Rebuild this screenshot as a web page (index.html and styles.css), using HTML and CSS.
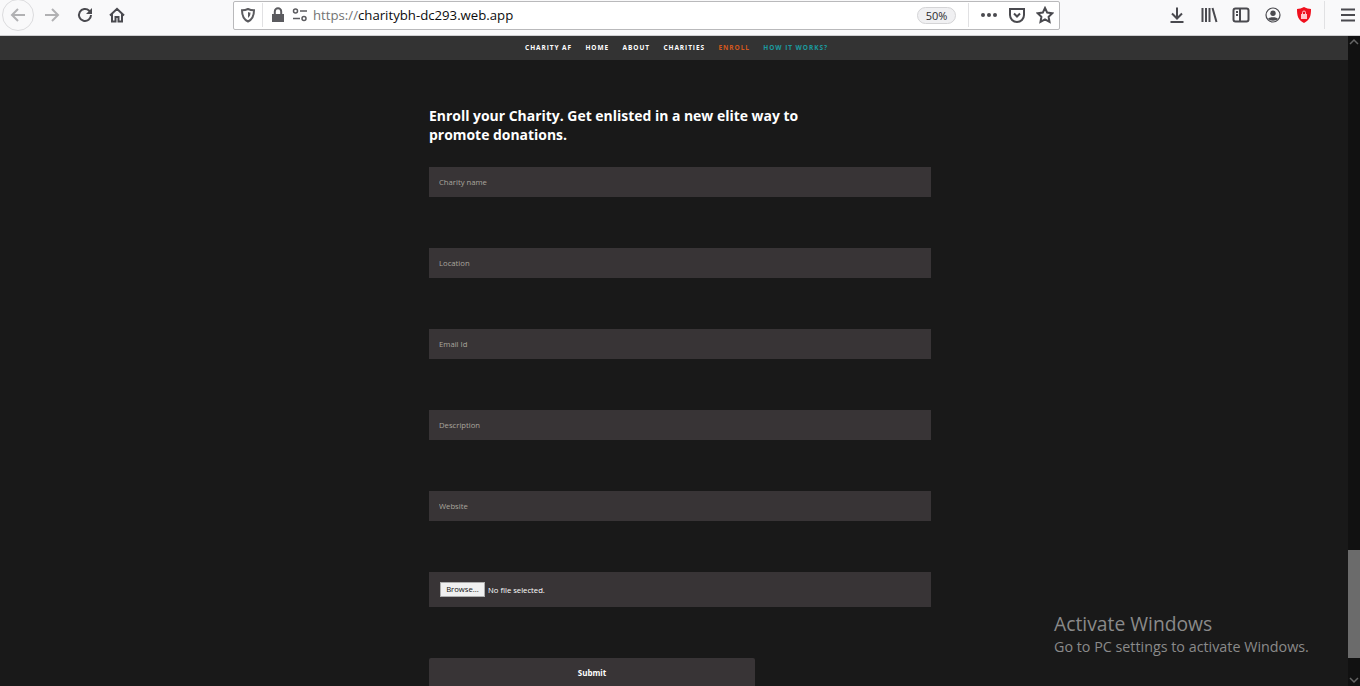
FILE: index.html
```html
<!DOCTYPE html>
<html lang="en">
<head>
<meta charset="utf-8">
<title>Charity AF</title>
<link rel="stylesheet" href="styles.css">
</head>
<body>
<header class="browser">
  <div class="nav-btns">
    <span class="round-btn">
      <svg width="18" height="18" viewBox="0 0 18 18" class="ic-faint"><path d="M16 9H3M9 3 3 9l6 6"/></svg>
    </span>
    <svg class="fwd ic-faint" width="18" height="18" viewBox="0 0 18 18"><path d="M2 9h13M9 3l6 6-6 6"/></svg>
    <svg class="reload ic-dark" width="18" height="18" viewBox="0 0 18 18"><path d="M15 9a6 6 0 1 1-1.800-4.300L15 6.500"/><path class="fill" d="M16 2v6h-6z"/></svg>
    <svg class="home ic-dark" width="18" height="18" viewBox="0 0 18 18"><path d="M2 9.500 9 2.800l7 6.700M4 8v7.500h3.500V11h3v4.500H14V8"/></svg>
  </div>
  <div class="urlbar">
    <svg class="ic-mid shield-ic" width="16" height="16" viewBox="0 0 16 16"><path d="M8 2c2 1 4 1.300 6 1.300 0 5-1 9-6 11.200C3 12.300 2 8.300 2 3.300 4 3.300 6 3 8 2z"/><path d="M8 5c.8.400 1.600.5 2.500.6 0 2.500-.7 4.200-2.500 5.300z" class="fill"/></svg>
    <span class="sep sep-start"></span>
    <svg class="lock" width="14" height="16" viewBox="0 0 14 16"><path class="lockbody" d="M1 7h12v8H1z"/><path class="lockarc" d="M3.800 7V4.500a3.200 3.200 0 0 1 6.400 0V7"/></svg>
    <svg class="ic-mid perm" width="16" height="16" viewBox="0 0 16 16"><circle cx="3.500" cy="4" r="2"/><path d="M8 4h7M1 11.500h7"/><circle cx="12" cy="11.500" r="2"/></svg>
    <span class="url"><span class="scheme">https://</span>charitybh-dc293.web.app</span>
    <span class="zoom">50%</span>
    <span class="sep sep-end"></span>
    <span class="dots"><i class="dot"></i><i class="dot"></i><i class="dot"></i></span>
    <svg class="ic-dark pocket" width="18" height="18" viewBox="0 0 18 18"><path d="M2 3h14v6a7 7 0 0 1-14 0z"/><path d="m6 7.500 3 3 3-3"/></svg>
    <svg class="ic-dark star" width="18" height="18" viewBox="0 0 18 18"><path d="m9 2 2.200 4.600 5 .7-3.600 3.500.9 5L9 13.400l-4.500 2.400.9-5L1.800 7.300l5-.7z"/></svg>
  </div>
  <div class="tools">
    <svg class="ic-dark" width="18" height="18" viewBox="0 0 18 18"><path d="M9 1.500V12M4 7.500l5 5 5-5M2.500 16h13"/></svg>
    <svg class="ic-dark" width="18" height="18" viewBox="0 0 18 18"><path d="M2.500 2v14M6 2v14M9.500 2v14M12.500 2l4 14"/></svg>
    <svg class="ic-dark" width="18" height="18" viewBox="0 0 18 18"><rect x="1.500" y="2.500" width="15" height="13" rx="2"/><path d="M8 2.500v13M4 6h2M4 9h2"/></svg>
    <svg class="ic-thin" width="18" height="18" viewBox="0 0 18 18"><circle cx="9" cy="9" r="7"/><circle class="fill" cx="9" cy="7.300" r="2.700"/><path class="fill" d="M4 13c1-2.500 9-2.500 10 0-2 2.200-8 2.200-10 0z"/></svg>
    <svg class="shield" width="16" height="18" viewBox="0 0 16 18"><path class="shield-red" d="M8 1c2 1.200 5 2 7 2 0 7-1 11-7 14C2 14 1 10 1 3c2 0 5-.8 7-2z"/><path class="shield-lock" d="M5 8h6v5H5z"/><path class="shield-arc" d="M6.500 8V6.500a1.500 1.500 0 0 1 3 0V8"/></svg>
    <span class="sep tool-sep"></span>
    <svg class="ic-dark" width="16" height="18" viewBox="0 0 16 18"><path d="M1 3.500h14M1 9h14M1 14.500h14"/></svg>
  </div>
</header>

<div class="viewport">
  <div class="page">
    <nav class="sitenav">
      <a class="link">CHARITY AF</a>
      <a class="link">HOME</a>
      <a class="link">ABOUT</a>
      <a class="link">CHARITIES</a>
      <a class="link active">ENROLL</a>
      <a class="link teal">HOW IT WORKS?</a>
    </nav>
    <main class="content">
      <h1 class="title">Enroll your Charity. Get enlisted in a new elite way to promote donations.</h1>
      <form class="form">
        <input class="field" type="text" placeholder="Charity name">
        <input class="field" type="text" placeholder="Location">
        <input class="field" type="text" placeholder="Email Id">
        <input class="field" type="text" placeholder="Description">
        <input class="field" type="text" placeholder="Website">
        <div class="file"><span class="browse">Browse...</span><span class="nofile">No file selected.</span></div>
        <button class="submit" type="button">Submit</button>
      </form>
    </main>
  </div>
  <div class="scrollbar">
    <svg class="arrow" width="12" height="12" viewBox="0 0 12 12"><path d="m2 8 4-4 4 4"/></svg>
    <div class="track"><div class="thumb"></div></div>
    <svg class="arrow" width="12" height="12" viewBox="0 0 12 12"><path d="m2 4 4 4 4-4"/></svg>
  </div>
  <aside class="watermark">
    <div class="wm-big">Activate Windows</div>
    <div class="wm-small">Go to PC settings to activate Windows.</div>
  </aside>
</div>
</body>
</html>
```
FILE: styles.css
```css
* { box-sizing: border-box; }
html, body { margin: 0; height: 100%; overflow: hidden; }
body {
  width: 1360px;
  height: 686px;
  display: flex;
  flex-direction: column;
  font-family: "Open Sans", "Noto Sans", sans-serif;
  background: #191919;
}

/* Browser chrome */
.browser {
  height: 36px;
  flex: none;
  display: flex;
  align-items: center;
  padding-bottom: 5px;
  background: #f9f9fa;
  border-bottom: 1px solid #cfcfd1;
}
svg { flex: none; }
svg path, svg circle, svg rect { fill: none; stroke-width: 2; }
.ic-faint path { stroke: #b1b1b3; }
.ic-dark path, .ic-dark rect { stroke: #4a4a4f; }
.ic-mid path, .ic-mid circle { stroke: #5b5b5f; }
.ic-thin circle, .ic-thin path { stroke: #4a4a4f; stroke-width: 1.2; }
.ic-dark path.fill { fill: #4a4a4f; stroke: none; }
.ic-mid path.fill { fill: #5b5b5f; stroke: none; }
.ic-thin .fill { fill: #4a4a4f; stroke: none; }
.nav-btns { flex: none; display: flex; align-items: center; width: 233px; padding-left: 2px; }
.round-btn {
  width: 32px; height: 32px;
  flex: none;
  border: 1px solid #dcdcde;
  border-radius: 50%;
  display: flex; align-items: center; justify-content: center;
}
.fwd { margin-left: 9px; }
.reload { margin-left: 15px; }
.home { margin-left: 14px; }
.urlbar {
  flex: none;
  width: 827px;
  height: 29px;
  display: flex;
  align-items: center;
  background: #fff;
  border: 1px solid #b9b9bb;
  border-radius: 2px;
  padding-left: 6px;
}
.sep { width: 1px; height: 24px; background: #e1e1e3; flex: none; }
.sep-start { margin-left: 6px; }
.lock { margin-left: 8px; }
.lockbody { fill: #5b5b5f; stroke: none; }
.lockarc { stroke: #5b5b5f; }
.perm { margin-left: 7px; }
.perm path, .perm circle { stroke-width: 1.500; }
.url { margin-left: 5px; font-size: 13.200px; color: #0c0c0d; width: 604px; flex: none; white-space: nowrap; }
.scheme { color: #737373; }
.zoom {
  flex: none;
  width: 39px; height: 17px;
  border: 1px solid #d4d4d6;
  border-radius: 9px;
  background: #f0f0f2;
  color: #2a2a2e;
  font-size: 11px;
  line-height: 15px;
  text-align: center;
}
.sep-end { margin-left: 12px; }
.dots { margin-left: 12px; width: 17px; flex: none; display: flex; gap: 2px; }
.dot { width: 4px; height: 4px; border-radius: 50%; background: #4a4a4f; }
.pocket { margin-left: 10px; }
.star { margin-left: 10px; }
.tools { flex: 1; display: flex; align-items: center; padding-left: 108px; }
.tools > svg { margin-right: 14px; }
.tools > .shield { margin-right: 12px; }
.shield-red { fill: #f0101e; stroke: none; }
.shield-lock { fill: #ffc4c8; stroke: none; }
.shield-arc { stroke: #ffc4c8; stroke-width: 1; }
.tool-sep { height: 28px; margin-right: 15px; }

/* Page viewport */
.viewport { flex: 1; display: flex; position: relative; min-height: 0; }
.page { flex: 1; min-width: 0; background: #191919; }
.sitenav {
  height: 24px;
  background: #333;
  display: flex;
  align-items: center;
  justify-content: center;
  gap: 13.500px;
  padding: 0 0 2px 5px;
}
.link {
  color: #fff;
  font-size: 6.500px;
  font-weight: 700;
  letter-spacing: .93px;
  white-space: nowrap;
}
.active { color: #d2571d; }
.teal { color: #1b9a9f; }

.content { padding: 47px 0 0 429px; }
.title {
  width: 400px;
  margin: 0 0 23px;
  color: #fff;
  font-size: 13.950px;
  line-height: 18.500px;
  font-weight: 700;
}
.form { display: flex; flex-direction: column; align-items: flex-start; gap: 51px; }
.field {
  width: 502px;
  height: 30px;
  border: 0;
  outline: 0;
  padding: 0 10px;
  background: #383436;
  color: #fff;
  font-family: inherit;
  font-size: 7.700px;
}
.field::placeholder { color: #aaa69e; opacity: 1; }
.file {
  width: 502px;
  height: 35px;
  background: #383436;
  display: flex;
  align-items: center;
  padding-left: 11px;
  font-size: 7.700px;
  color: #fff;
}
.browse {
  width: 45px;
  height: 15px;
  margin-right: 3px;
  background: #f0f0f0;
  border: 1px solid #adadad;
  color: #111;
  text-align: center;
  line-height: 13px;
}
.submit {
  width: 326px;
  height: 40px;
  border: 0;
  border-radius: 2px;
  background: #383436;
  color: #fff;
  font-family: inherit;
  font-size: 8px;
  font-weight: 700;
  padding: 0 0 11px;
}

/* Scrollbar */
.scrollbar {
  width: 12px;
  flex: none;
  background: #111;
  display: flex;
  flex-direction: column;
}
.arrow { flex: none; }
.arrow path { stroke: #666; stroke-width: 1.500; }
.track { flex: 1; display: flex; flex-direction: column; justify-content: flex-end; padding-bottom: 16px; }
.thumb { height: 108px; background: #6b6b6b; }

/* Windows watermark */
.watermark {
  position: absolute;
  left: 1054px;
  top: 575px;
  color: #8a8a8a;
  white-space: nowrap;
}
.wm-big { font-size: 19.300px; line-height: 25px; }
.wm-small { font-size: 14.320px; line-height: 21px; }
```
